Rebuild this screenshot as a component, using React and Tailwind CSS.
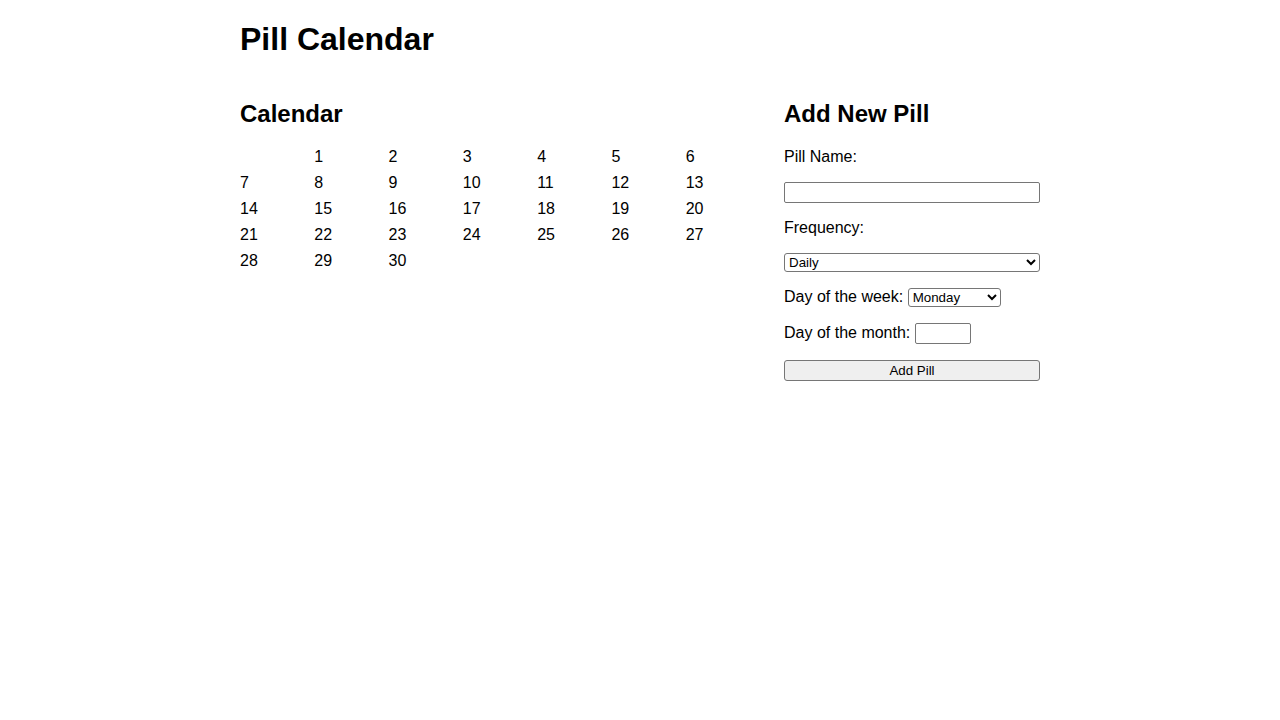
import React from "react";

export default function App() {
  const cells = [null, ...Array.from({ length: 30 }, (_, i) => i + 1)];
  return (
    <div className="min-h-screen bg-white text-black font-['Liberation_Sans',Arial,sans-serif] text-[16px] leading-[normal]">
      <div className="w-[800px] mx-auto">
        <h1 className="text-[32px] font-bold leading-[normal] my-[21.44px]">Pill Calendar</h1>
        <div className="flex gap-[24px]">
          <div className="w-[520px]">
            <h2 className="text-[24px] font-bold leading-[normal] my-[19.92px]">Calendar</h2>
            <div className="grid grid-cols-7 gap-y-[8px]">
              {cells.map((d, i) => (
                <div key={i} className="h-[18px] leading-[18px]">{d ?? ""}</div>
              ))}
            </div>
          </div>
          <div className="w-[256px]">
            <h2 className="text-[24px] font-bold leading-[normal] my-[19.92px]">Add New Pill</h2>
            <label className="block">Pill Name:</label>
            <input
              type="text"
              className="block w-full h-[21px] mt-[16px] mb-[16px] border border-[#767676] rounded-[2px] bg-white px-[2px] text-[13.33px]"
            />
            <label className="block">Frequency:</label>
            <select className="block w-full h-[19px] mt-[16px] mb-[16px] border border-[#767676] rounded-[3px] bg-white text-[13.33px] font-['Liberation_Sans',Arial,sans-serif]">
              <option>Daily</option>
              <option>Weekly</option>
              <option>Monthly</option>
            </select>
            <div className="flex items-center gap-[4.5px] h-[19px]">
              <span>Day of the week:</span>
              <select className="w-[93px] h-[19px] border border-[#767676] rounded-[3px] bg-white text-[13.33px] font-['Liberation_Sans',Arial,sans-serif]">
                <option>Monday</option>
                <option>Tuesday</option>
                <option>Wednesday</option>
                <option>Thursday</option>
                <option>Friday</option>
                <option>Saturday</option>
                <option>Sunday</option>
              </select>
            </div>
            <div className="flex items-center gap-[4.5px] h-[21px] mt-[16px]">
              <span>Day of the month:</span>
              <input
                type="number"
                className="w-[56px] h-[21px] border border-[#767676] rounded-[2px] bg-white text-[13.33px] [appearance:textfield]"
              />
            </div>
            <button className="block w-full h-[21px] mt-[16px] border border-[#767676] rounded-[3px] bg-[#efefef] text-[13.33px] font-['Liberation_Sans',Arial,sans-serif]">
              Add Pill
            </button>
          </div>
        </div>
      </div>
    </div>
  );
}
